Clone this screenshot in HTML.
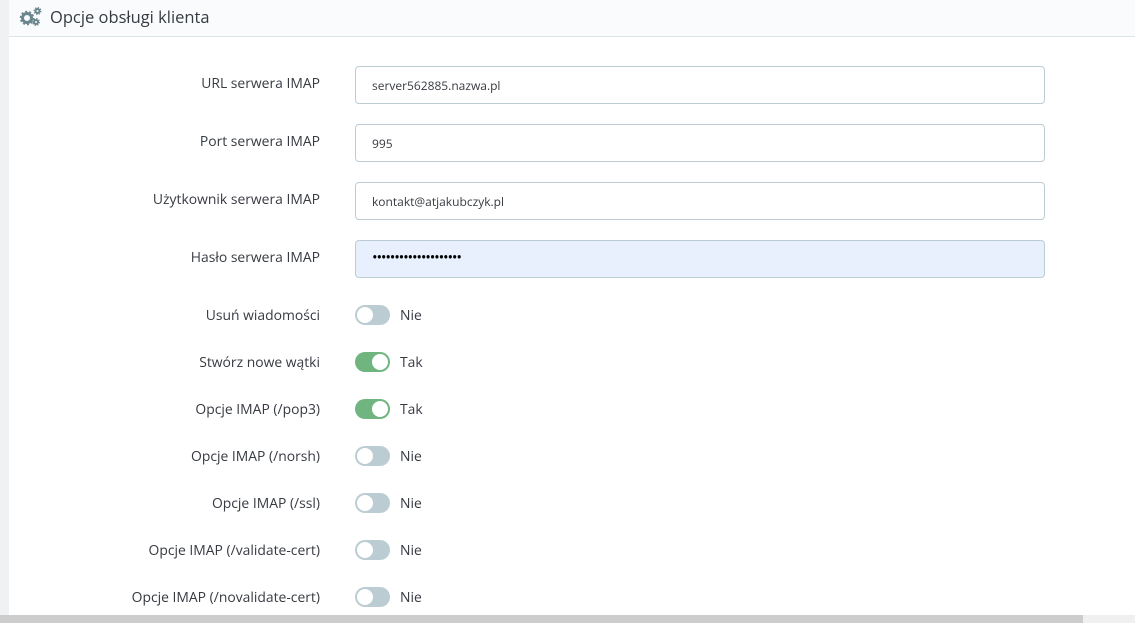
<!DOCTYPE html>
<html><head><meta charset="utf-8"><style>
*{margin:0;padding:0;box-sizing:border-box}
body{width:1135px;height:623px;overflow:hidden;background:#eff1f2;font-family:"Open Sans","Liberation Sans",sans-serif;position:relative}
.panel{position:absolute;left:9px;top:0;right:0;bottom:0;background:#fff}
.hdr{position:absolute;left:9px;top:0;right:0;height:37px;background:#fafbfc;border-bottom:1px solid #dbe6e9}
.hdr span{position:absolute;left:41px;top:5px;font-size:16.5px;color:#363a41}
.hdr svg{position:absolute;left:10px;top:6px}
.lab{position:absolute;right:815px;font-size:13.9px;color:#363a41;white-space:nowrap}
.inp{position:absolute;left:355px;width:690px;height:38px;border:1px solid #bbcdd2;border-radius:4px;background:#fff;font-size:12px;color:#363a41;padding:10px 0 0 16px}
.tg{position:absolute;left:355px;width:35px;height:20px;border-radius:10px;background:#bbcdd2}
.tg::after{content:"";position:absolute;top:2px;left:2px;width:16px;height:16px;border-radius:50%;background:#fff}
.tg.on{background:#70b580}
.tg.on::after{left:17px}
.tv{position:absolute;left:400px;font-size:13.9px;color:#363a41}
.sb{position:absolute;left:0;top:615px;width:1083px;height:8px;background:#cdcdcd}
.sb2{position:absolute;left:1083px;top:615px;right:0;height:8px;background:#f0f0f0}
</style></head><body>
<div class="panel"></div>
<div class="hdr">
<svg width="24" height="22" viewBox="0 0 24 22"><g fill="none" stroke="#6c868e"><circle cx="8" cy="12" r="4.5" stroke-width="3"/><circle cx="8" cy="12" r="6.3" stroke-width="2" stroke-dasharray="2 1.95"/><circle cx="18.5" cy="5" r="2" stroke-width="2"/><circle cx="18.5" cy="5" r="3.3" stroke-width="1.4" stroke-dasharray="1.3 1.3"/><circle cx="17" cy="16" r="2" stroke-width="2"/><circle cx="17" cy="16" r="3.3" stroke-width="1.4" stroke-dasharray="1.3 1.3"/></g></svg>
<span>Opcje obsługi klienta</span></div>

<div class="lab" style="top:74px">URL serwera IMAP</div>
<div class="inp" style="top:66px">server562885.nazwa.pl</div>
<div class="lab" style="top:132px">Port serwera IMAP</div>
<div class="inp" style="top:124px">995</div>
<div class="lab" style="top:190px">Użytkownik serwera IMAP</div>
<div class="inp" style="top:182px">kontakt@atjakubczyk.pl</div>
<div class="lab" style="top:248px">Hasło serwera IMAP</div>
<div class="inp" style="top:240px;background:#e8f0fe;font-size:15px;letter-spacing:-1.2px;padding-top:6px;color:#000">••••••••••••••••••••</div>

<div class="lab" style="top:306px">Usuń wiadomości</div><div class="tg" style="top:305px"></div><div class="tv" style="top:306px">Nie</div>
<div class="lab" style="top:353px">Stwórz nowe wątki</div><div class="tg on" style="top:352px"></div><div class="tv" style="top:353px">Tak</div>
<div class="lab" style="top:400px">Opcje IMAP (/pop3)</div><div class="tg on" style="top:399px"></div><div class="tv" style="top:400px">Tak</div>
<div class="lab" style="top:447px">Opcje IMAP (/norsh)</div><div class="tg" style="top:446px"></div><div class="tv" style="top:447px">Nie</div>
<div class="lab" style="top:494px">Opcje IMAP (/ssl)</div><div class="tg" style="top:493px"></div><div class="tv" style="top:494px">Nie</div>
<div class="lab" style="top:541px">Opcje IMAP (/validate-cert)</div><div class="tg" style="top:540px"></div><div class="tv" style="top:541px">Nie</div>
<div class="lab" style="top:588px">Opcje IMAP (/novalidate-cert)</div><div class="tg" style="top:587px"></div><div class="tv" style="top:588px">Nie</div>
<div class="sb"></div><div class="sb2"></div>
</body></html>
